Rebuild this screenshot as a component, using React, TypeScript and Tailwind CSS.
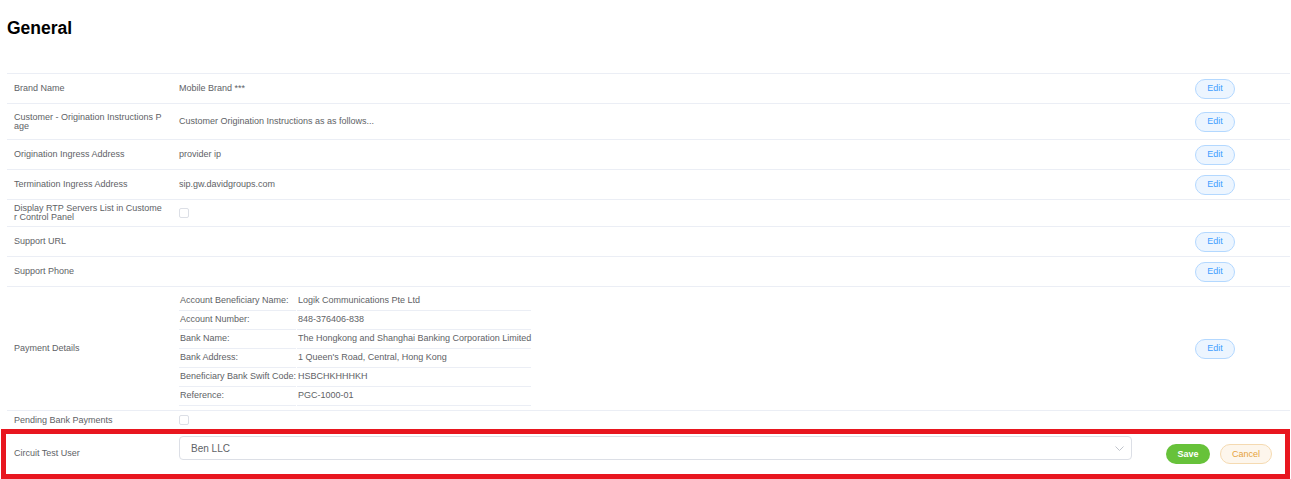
import type { ReactNode } from 'react';

const paymentDetails: [string, string][] = [
  ['Account Beneficiary Name:', 'Logik Communications Pte Ltd'],
  ['Account Number:', '848-376406-838'],
  ['Bank Name:', 'The Hongkong and Shanghai Banking Corporation Limited'],
  ['Bank Address:', "1 Queen's Road, Central, Hong Kong"],
  ['Beneficiary Bank Swift Code:', 'HSBCHKHHHKH'],
  ['Reference:', 'PGC-1000-01'],
];

function EditButton() {
  return (
    <button className="w-[40px] h-[20px] rounded-full border border-[#b3d8ff] bg-[#ecf5ff] text-[#409eff] text-[9px] leading-none">
      Edit
    </button>
  );
}

function Checkbox() {
  return <span className="block w-[10px] h-[10px] border border-[#dcdfe6] rounded-[2px] bg-white" />;
}

interface RowProps {
  label: string;
  height: string;
  children?: ReactNode;
  editable?: boolean;
}

function Row({ label, height, children, editable }: RowProps) {
  return (
    <div className={`flex items-center border-t border-[#ebeef5] ${height}`}>
      <div className="w-[165px] shrink-0 pl-[7px] pr-[9px] leading-[9px] break-all">{label}</div>
      <div className="flex-1 px-[7px]">{children}</div>
      <div className="w-[100px] shrink-0 pl-[5px]">{editable && <EditButton />}</div>
    </div>
  );
}

export default function App() {
  return (
    <div className="font-['Liberation_Sans',Arial,sans-serif] text-[9px] text-[#606266] bg-white min-h-[479px]">
      <h2 className="px-[7px] pt-[18px] h-[73px] text-[17.5px] leading-[21px] font-bold text-black">General</h2>

      <div className="ml-[7px] mr-px">
        <Row label="Brand Name" height="h-[30px]" editable>
          Mobile Brand ***
        </Row>
        <Row label="Customer - Origination Instructions Page" height="h-[36px]" editable>
          Customer Origination Instructions as as follows...
        </Row>
        <Row label="Origination Ingress Address" height="h-[30px]" editable>
          provider ip
        </Row>
        <Row label="Termination Ingress Address" height="h-[30px]" editable>
          sip.gw.davidgroups.com
        </Row>
        <Row label="Display RTP Servers List in Customer Control Panel" height="h-[27px]">
          <Checkbox />
        </Row>
        <Row label="Support URL" height="h-[30px]" editable />
        <Row label="Support Phone" height="h-[30px]" editable />
        <Row label="Payment Details" height="h-[124px]" editable>
          <div className="grid grid-cols-[117px_234px] gap-x-px">
            {paymentDetails.map(([k, v]) => (
              <div key={k} className="contents">
                <div className="h-[19px] flex items-center pl-px border-b border-[#ebeef5] whitespace-nowrap">{k}</div>
                <div className="h-[19px] flex items-center pl-px border-b border-[#ebeef5] whitespace-nowrap">{v}</div>
              </div>
            ))}
          </div>
        </Row>
        <Row label="Pending Bank Payments" height="h-[19px]">
          <Checkbox />
        </Row>
      </div>

      <div className="ml-px mr-px h-[50px] border-[5px] border-[#e8161f] flex items-center">
        <div className="w-[166px] shrink-0 pl-[8px]">Circuit Test User</div>
        <div className="flex-1 flex items-center pl-[7px]">
          <div className="flex-1 pb-[12px]">
            <div className="h-[24px] border border-[#dcdfe6] rounded-[4px] bg-white flex items-center justify-between pl-[11px] pr-[7px] text-[10px]">
              <span>Ben LLC</span>
              <svg width="9" height="5" viewBox="0 0 9 5" fill="none">
                <path d="M0.5 0.5L4.5 4.5L8.5 0.5" stroke="#c0c4cc" strokeWidth="1" />
              </svg>
            </div>
          </div>
          <button className="ml-[34px] w-[44px] h-[20px] rounded-full bg-[#67c23a] text-white text-[9px] leading-none font-bold">
            Save
          </button>
          <button className="ml-[10px] mr-[13px] w-[52px] h-[20px] rounded-full border border-[#f5dab1] bg-[#fdf6ec] text-[#e6a23c] text-[9px] leading-none">
            Cancel
          </button>
        </div>
      </div>
    </div>
  );
}
